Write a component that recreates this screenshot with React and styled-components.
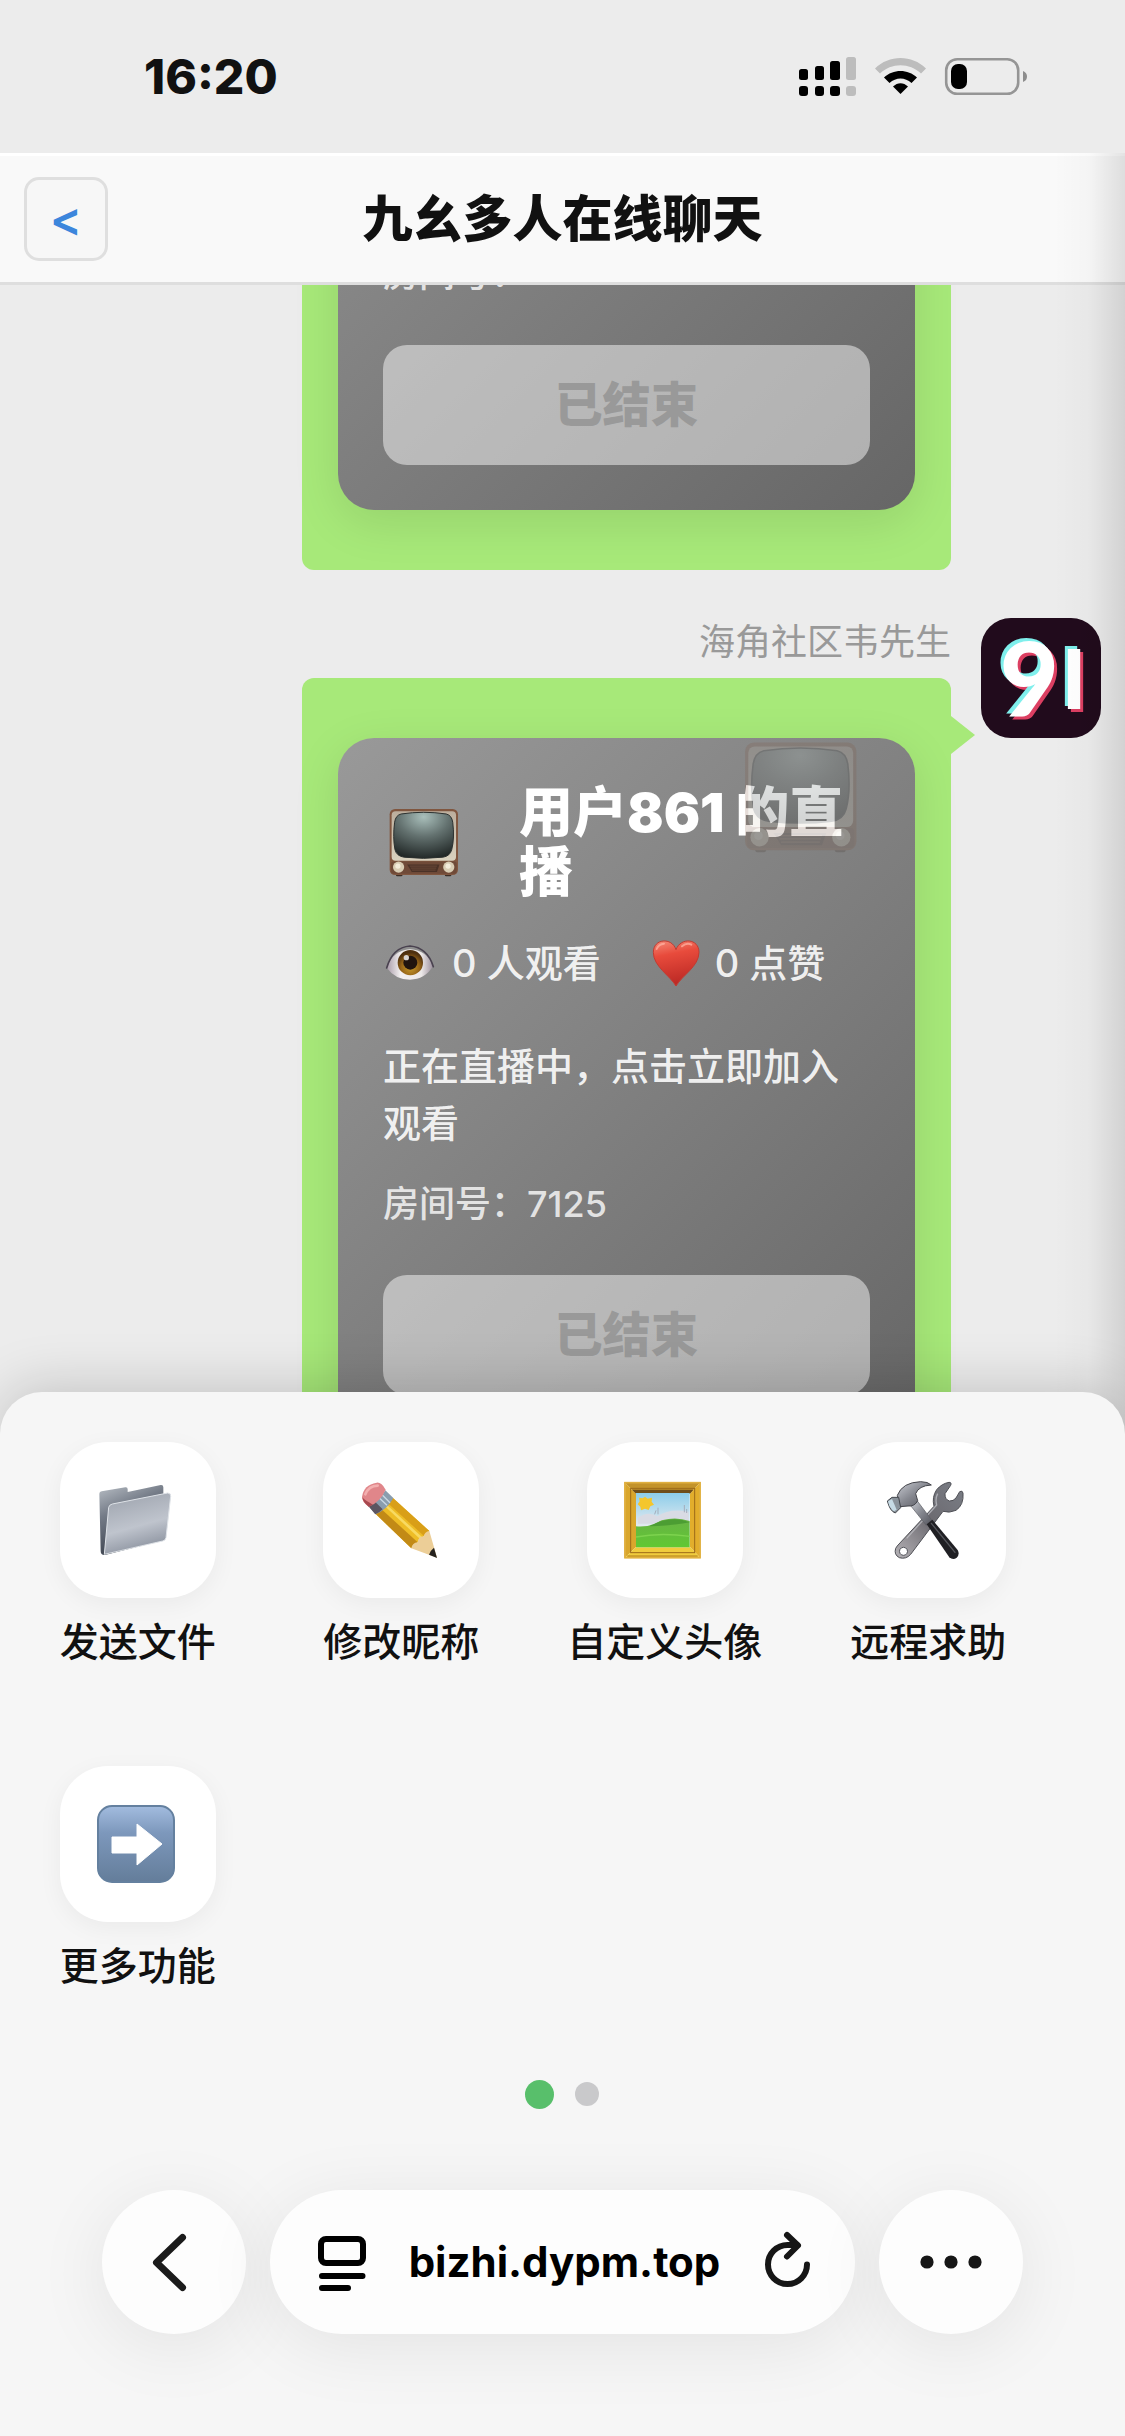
import React, { useState } from 'react'
import styled, { createGlobalStyle } from 'styled-components'

const GlobalStyle = createGlobalStyle`
  * {
    box-sizing: border-box;
  }
  body {
    margin: 0;
    background-color: #f6f6f6;
    font-family: Inter, 'Noto Sans CJK SC', sans-serif;
    color: #111;
  }
  button {
    font-family: inherit;
    border: none;
    padding: 0;
    background: none;
  }
  svg {
    display: block;
    flex-shrink: 0;
    overflow: visible;
  }
`

const Screen = styled.div`
  display: flex;
  flex-direction: column;
  height: 100vh;
  overflow: hidden;
`

const StatusBar = styled.div`
  display: flex;
  align-items: center;
  justify-content: space-between;
  flex-shrink: 0;
  height: 153px;
  padding: 0 96px 0 144px;
  background-color: #ececec;
`
const Time = styled.time`
  font-size: 48px;
  font-weight: 800;
  line-height: 60px;
`

const Page = styled.div`
  display: flex;
  flex-direction: column;
  flex: 1;
  min-height: 0;
  position: relative;
`
const EdgeShade = styled.div`
  position: absolute;
  top: 0;
  right: 0;
  bottom: 0;
  width: 72px;
  background: linear-gradient(to right, rgba(0,0,0,0), rgba(0,0,0,0.02) 50%, rgba(0,0,0,0.11));
  pointer-events: none;
`
const Header = styled.header`
  display: grid;
  grid-template-columns: 84px 1fr 84px;
  align-items: center;
  flex-shrink: 0;
  height: 132px;
  padding: 0 24px;
  background-color: #f9f9f9;
  border-top: 3px solid #fff;
  border-bottom: 3px solid #dedede;
`
const HeaderBack = styled.button`
  width: 84px;
  height: 84px;
  border: 3px solid #dfdfdf;
  border-radius: 15px;
  background-color: #f7f7f7;
  color: #3c86dc;
  font-size: 48px;
  font-weight: 600;
  line-height: 60px;
`
const Title = styled.h1`
  margin: 0;
  font-size: 50px;
  font-weight: 800;
  line-height: 72px;
  text-align: center;
`

const Chat = styled.main`
  display: flex;
  flex-direction: column;
  justify-content: flex-end;
  gap: 48px;
  flex: 1;
  min-height: 0;
  overflow: hidden;
  padding: 0 24px;
  background-color: #ececec;
`
const Message = styled.article`
  display: flex;
  justify-content: flex-end;
  align-items: flex-start;
  gap: 30px;
  flex-shrink: 0;
`
const MessageBody = styled.div`
  display: flex;
  flex-direction: column;
  gap: 12px;
  width: 649px;
`
const Sender = styled.div`
  font-size: 36px;
  line-height: 48px;
  color: #999;
  text-align: right;
`
const Bubble = styled.div`
  position: relative;
  padding: 60px 36px;
  border-radius: 12px;
  background-color: #a7e979;
  &::after {
    content: '';
    position: absolute;
    top: 38px;
    left: 100%;
    border: 19px solid transparent;
    border-left: 24px solid #a7e979;
    border-right: none;
  }
`
const Avatar = styled.div`
  display: flex;
  align-items: center;
  justify-content: center;
  gap: 3px;
  width: 120px;
  height: 120px;
  padding-left: 4px;
  border-radius: 30px;
  overflow: hidden;
  background-color: #210b1c;
  color: #fff;
  font-family: Lato, sans-serif;
  font-weight: 900;
  text-shadow: -3px -3px 0 #7fefec, 3px 3px 0 #dc3f62;
`
const AvatarSpace = styled.div`
  width: 120px;
`
const AvatarMark = styled.span`
  font-size: ${props => props.$size};
  line-height: 108px;
`

const LiveCard = styled.div`
  position: relative;
  display: flex;
  flex-direction: column;
  justify-content: flex-end;
  min-height: 702px;
  padding: 45px;
  border-radius: 36px;
  background: linear-gradient(135deg, #999, #666);
  box-shadow: 0 12px 48px rgba(0,0,0,0.1);
  color: #fff;
`
const CardHead = styled.div`
  display: flex;
  align-items: center;
  gap: 54px;
  padding-left: 6px;
`
const CardTitle = styled.h2`
  margin: 0;
  padding-left: 6px;
  font-size: 54px;
  font-weight: 900;
  line-height: 60px;
`
const Watermark = styled.div`
  position: absolute;
  top: 3px;
  right: 57px;
  opacity: 0.2;
`
const Stats = styled.div`
  display: flex;
  gap: 51px;
  margin: 36px 0 51px;
  font-size: 38px;
  font-weight: 500;
  line-height: 48px;
  color: rgba(255,255,255,0.9);
`
const Stat = styled.span`
  display: flex;
  align-items: center;
  gap: 15px;
`
const Desc = styled.p`
  margin: 0;
  font-size: 38px;
  font-weight: 500;
  line-height: 57px;
  color: rgba(255,255,255,0.9);
`
const Room = styled.p`
  margin: 30px 0 48px;
  font-size: 36px;
  font-weight: 500;
  line-height: 45px;
  color: rgba(255,255,255,0.8);
`
const EndedButton = styled.button`
  display: block;
  width: 100%;
  height: 120px;
  border-radius: 24px;
  background-color: rgba(255,255,255,0.48);
  color: #999;
  font-size: 48px;
  font-weight: 800;
  line-height: 72px;
`

// the sheet slides over the bottom of the message list
const Sheet = styled.section`
  position: relative;
  flex-shrink: 0;
  margin-top: -108px;
  border-radius: 42px 42px 0 0;
  background-color: #f6f6f6;
  box-shadow: 0 -6px 54px rgba(0,0,0,0.17);
`
const Features = styled.div`
  display: grid;
  grid-template-columns: repeat(4, 1fr);
  column-gap: 36px;
  row-gap: 96px;
  padding: 50px 83px 0 24px;
`
const Feature = styled.button`
  display: flex;
  flex-direction: column;
  align-items: center;
  gap: 15px;
  color: #111;
  font-size: 39px;
  font-weight: 500;
  line-height: 57px;
  white-space: nowrap;
`
const Tile = styled.span`
  display: flex;
  align-items: center;
  justify-content: center;
  width: 156px;
  height: 156px;
  border-radius: 48px;
  background-color: #fff;
  box-shadow: 0 6px 24px rgba(0,0,0,0.05);
`
const Dots = styled.div`
  display: flex;
  align-items: center;
  justify-content: center;
  gap: 21px;
  height: 30px;
  margin-top: 85px;
  padding-right: 2px;
`
const Dot = styled.button`
  width: ${props => props.$active ? '29px' : '24px'};
  height: ${props => props.$active ? '29px' : '24px'};
  border-radius: 50%;
  background-color: ${props => props.$active ? '#58bf6b' : '#c9c9cb'};
`

const BrowserBar = styled.nav`
  display: flex;
  gap: 24px;
  padding: 81px 102px 102px;
`
const RoundButton = styled.button`
  display: flex;
  align-items: center;
  justify-content: center;
  flex-shrink: 0;
  width: 144px;
  height: 144px;
  border-radius: 50%;
  background-color: #fdfdfd;
  box-shadow: 0 12px 72px rgba(0,0,0,0.08);
`
const AddressBar = styled.div`
  display: flex;
  align-items: center;
  justify-content: space-between;
  flex: 1;
  height: 144px;
  padding: 0 44px 0 48px;
  border-radius: 72px;
  background-color: #fdfdfd;
  box-shadow: 0 12px 72px rgba(0,0,0,0.08);
`
const Address = styled.a`
  color: #000;
  font-size: 42px;
  font-weight: 700;
  line-height: 60px;
  text-decoration: none;
`

const StatusIcons = () => (
  <svg width="230" height="40" viewBox="799 56 230 40">
    <g>
      <rect x="799" y="68" width="9" height="11" rx="2.5"/>
      <rect x="815" y="65" width="9" height="14" rx="2.5"/>
      <rect x="830" y="60" width="10" height="19" rx="2.5"/>
      <rect x="846" y="56" width="10" height="23" rx="2.5" fill="#bdbdbd"/>
      <rect x="799" y="85" width="9" height="10" rx="3"/>
      <rect x="815" y="85" width="9" height="10" rx="3"/>
      <rect x="830" y="85" width="10" height="10" rx="3"/>
      <rect x="846" y="85" width="10" height="10" rx="3" fill="#bdbdbd"/>
    </g>
    <path d="M875 67.500C889 53.500 912 53.500 926 67.500L921 72.500C909.500 61.500 891.500 61.500 880 72.500Z" fill="#bdbdbd"/>
    <path d="M884 76.500C893 67.700 908 67.700 917 76.500L911.500 82C905 76 896 76 889.500 82Z"/>
    <path d="M893 85.500C897.500 81 903.500 81 908 85.500L900.500 93Z"/>
    <rect x="946.200" y="58.200" width="72" height="34.600" rx="11" fill="none" stroke="#959595" strokeWidth="2.600"/>
    <rect x="951" y="63" width="16" height="25" rx="7"/>
    <path d="M1023 70Q1027 71.500 1027 75.500T1023 81Z" fill="#8d8d8d"/>
  </svg>
)

const TvIcon = ({ size }) => (
  <svg width={size} height={size} viewBox="55 234 212 212">
    <defs>
      <radialGradient id="tvScreen" cx="0.5" cy="0.1" r="0.95">
        <stop offset="0" stopColor="#a9bfbb"/>
        <stop offset="0.45" stopColor="#63716f"/>
        <stop offset="1" stopColor="#1c2221"/>
      </radialGradient>
      <linearGradient id="tvCase" x1="0" y1="0" x2="0" y2="1">
        <stop offset="0" stopColor="#bcae9d"/>
        <stop offset="1" stopColor="#d9d2bf"/>
      </linearGradient>
    </defs>
    <rect x="76" y="430" width="20" height="11" rx="4" fill="#3b2d25"/>
    <rect x="224" y="430" width="20" height="11" rx="4" fill="#3b2d25"/>
    <rect x="57" y="237" width="207" height="200" rx="16" fill="#80563f"/>
    <rect x="63" y="244" width="195" height="150" rx="12" fill="url(#tvCase)"/>
    <path d="M92 252Q160 242 228 252Q245 256 248 277Q254 325 245 360Q240 380 218 383Q160 390 101 383Q78 380 73 360Q66 322 72 277Q75 256 92 252Z" fill="url(#tvScreen)" stroke="#2a302f" strokeWidth="3"/>
    <rect x="61" y="396" width="199" height="37" rx="7" fill="#6f4a38"/>
    <path d="M110 405H208L200 428H124Z" fill="#4b3227"/>
    <path d="M118 410H200M121 416H198M124 422H196" stroke="#7b5542" strokeWidth="2"/>
    <circle cx="84" cy="413" r="17" fill="#d8ccb3"/>
    <circle cx="236" cy="413" r="17" fill="#d8ccb3"/>
    <circle cx="82" cy="410" r="8" fill="#f3ecdb"/>
    <circle cx="234" cy="410" r="8" fill="#f3ecdb"/>
  </svg>
)

const EyeIcon = () => (
  <svg width="54" height="48" viewBox="41 622 162 144">
    <defs>
      <linearGradient id="eyeWhite" x1="0" x2="1">
        <stop offset="0" stopColor="#a79aa8"/>
        <stop offset="0.3" stopColor="#f4f1f1"/>
        <stop offset="0.75" stopColor="#ece8e8"/>
        <stop offset="1" stopColor="#9b8f9c"/>
      </linearGradient>
      <radialGradient id="eyeIris" cx="0.5" cy="0.7" r="0.6">
        <stop offset="0" stopColor="#c79a2a"/>
        <stop offset="0.6" stopColor="#966418"/>
        <stop offset="1" stopColor="#4e3010"/>
      </radialGradient>
    </defs>
    <path d="M52 708Q72 655 122 653Q172 655 191 704Q166 744 122 744Q78 744 52 708Z" fill="url(#eyeWhite)"/>
    <circle cx="123" cy="693" r="38" fill="url(#eyeIris)"/>
    <circle cx="123" cy="693" r="21" fill="#20140e"/>
    <circle cx="111" cy="678" r="8" fill="#d9d4d2"/>
    <path d="M52 709Q70 647 122 643Q174 647 192 705" fill="none" stroke="#4a4250" strokeWidth="5" strokeLinecap="round"/>
  </svg>
)

const HeartIcon = () => (
  <svg width="48" height="48" viewBox="842 622 144 144">
    <defs>
      <linearGradient id="heart" x1="0" y1="0" x2="0.2" y2="1">
        <stop offset="0" stopColor="#f58b78"/>
        <stop offset="0.35" stopColor="#e84b3c"/>
        <stop offset="1" stopColor="#bd2a25"/>
      </linearGradient>
    </defs>
    <path d="M914 763C896 732 846 704 846 662C846 620 902 616 914 654C928 616 983 620 983 662C983 704 932 732 914 763Z" fill="url(#heart)" stroke="#c33a30" strokeWidth="3"/>
    <path d="M856 652Q862 637 878 636M932 644Q946 632 960 639" stroke="#ffb5a5" strokeWidth="6" strokeLinecap="round" fill="none" opacity="0.7"/>
  </svg>
)

const FolderIcon = () => (
  <svg width="78" height="78" viewBox="147 152 234 234">
    <defs>
      <linearGradient id="folderBack" x1="0" y1="0" x2="0.4" y2="1">
        <stop offset="0" stopColor="#b9bfc6"/>
        <stop offset="0.4" stopColor="#757c88"/>
        <stop offset="1" stopColor="#363c48"/>
      </linearGradient>
      <linearGradient id="folderFront" x1="0.3" y1="0" x2="0.6" y2="1">
        <stop offset="0" stopColor="#9fa5af"/>
        <stop offset="0.55" stopColor="#bfc4cd"/>
        <stop offset="1" stopColor="#858c99"/>
      </linearGradient>
    </defs>
    <path d="M148 190Q148 184 155 183L226 171Q233 170 233 177V185L332 164Q340 163 340 171V330L165 374Q152 375 152 362Z" fill="url(#folderBack)"/>
    <path d="M176 231Q178 223 187 221L353 188Q363 188 362 198L348 322Q346 331 338 332L163 372Z" fill="url(#folderFront)" stroke="#dfe3e8" strokeWidth="3"/>
  </svg>
)

const PencilIcon = () => (
  <svg width="78" height="78" viewBox="936 152 234 234">
    <path d="M975 249L1028 202L1138 302L1084 354Z" fill="#eebd26"/>
    <path d="M975 249L993 235L1103 336L1084 354Z" fill="#c28a16"/>
    <path d="M1012 217L1028 202L1138 302L1122 317Z" fill="#d99f18"/>
    <path d="M1003 226L1008 221L1117 321L1111 327Z" fill="#f8da62"/>
    <path d="M1084 354Q1087 337 1103 336Q1104 319 1121 318Q1124 304 1138 302L1161 382Z" fill="#ecce97"/>
    <path d="M1152 352L1161 383L1137 373Q1140 361 1152 352Z" fill="#25221f"/>
    <path d="M955 227Q985 216 1006 180L1030 203Q1010 239 976 252Z" fill="#8a9dae"/>
    <path d="M955 227Q967 223 976 215L998 237Q987 248 976 252Z" fill="#5c5561"/>
    <path d="M988 203L1011 225M997 194L1020 217" stroke="#c9d8e4" strokeWidth="4"/>
    <path d="M936 200Q941 163 980 157Q994 155 1007 178Q990 216 956 229Q936 215 936 200Z" fill="#e0868a"/>
    <path d="M946 192Q956 167 983 166" stroke="#f3b0b0" strokeWidth="8" fill="none" strokeLinecap="round"/>
    <path d="M937 201Q939 217 956 229L969 223Q945 211 937 201Z" fill="#a8494f"/>
  </svg>
)

const PictureIcon = () => (
  <svg width="78" height="78" viewBox="168 152 234 234">
    <defs>
      <linearGradient id="sky" x1="0" y1="0" x2="0" y2="1">
        <stop offset="0" stopColor="#8ccdea"/>
        <stop offset="0.6" stopColor="#e3eaf0"/>
      </linearGradient>
      <linearGradient id="grass" x1="0" y1="0" x2="0" y2="1">
        <stop offset="0" stopColor="#69b346"/>
        <stop offset="1" stopColor="#5fc832"/>
      </linearGradient>
    </defs>
    <path d="M163 155H392L360 190H198Z" fill="#c3932a"/>
    <path d="M163 155L198 190V350L163 384Z" fill="#d9a62c"/>
    <path d="M392 155V384L360 350V190Z" fill="#e2ae2c"/>
    <path d="M163 384L198 350H360L392 384Z" fill="#f0cc3c"/>
    <rect x="165" y="157" width="225" height="225" fill="none" stroke="#e0b040" strokeWidth="5"/>
    <rect x="182" y="174" width="192" height="193" fill="none" stroke="#9c6a18" strokeWidth="3"/>
    <path d="M172 377H383" stroke="#b07d1c" strokeWidth="3"/>
    <path d="M186 178H370L360 190H198Z" fill="#6f4e1a"/>
    <rect x="198" y="188" width="161" height="163" fill="url(#sky)"/>
    <path d="M204 262Q235 240 262 258Q300 232 356 244V280H204Z" fill="#d9dbe4"/>
    <path d="M198 288Q240 292 275 270Q318 258 359 272V351H198Z" fill="url(#grass)"/>
    <path d="M238 288Q275 268 292 269Q325 262 359 276Q310 286 238 288Z" fill="#4c9d33"/>
    <path d="M198 320Q270 306 359 318" stroke="#7dd34e" strokeWidth="4" fill="none"/>
    <path d="M225 199L233 205L246 202L245 214L252 223L241 228L236 239L225 235L213 240L211 229L203 222L209 213L207 202L218 204Z" fill="#f4c62c"/>
    <path d="M264 232V252M258 240L254 252M343 224V246M350 236V248" stroke="#a3adbb" strokeWidth="3"/>
  </svg>
)

const ToolsIcon = () => (
  <svg width="78" height="78" viewBox="957 152 234 234">
    <defs>
      <linearGradient id="steel" x1="0" y1="0" x2="1" y2="1">
        <stop offset="0" stopColor="#c9ccd3"/>
        <stop offset="0.5" stopColor="#85878f"/>
        <stop offset="1" stopColor="#54555d"/>
      </linearGradient>
      <linearGradient id="wrench" x1="1" y1="0" x2="0" y2="1">
        <stop offset="0" stopColor="#7a7e86"/>
        <stop offset="0.5" stopColor="#6c6a70"/>
        <stop offset="1" stopColor="#b5b2b6"/>
      </linearGradient>
    </defs>
    <path d="M1137 156Q1146 156 1142 165L1125 190Q1124 207 1138 212Q1150 213 1158 203L1169 184Q1177 179 1179 188Q1182 224 1158 240Q1138 249 1119 243L1022 372Q1008 388 988 382Q971 373 977 354Q981 347 987 341L1092 228Q1085 200 1100 178Q1115 160 1137 156ZM1000 351A12 12 0 1 0 1001 351Z" fill="url(#wrench)" fillRule="evenodd" stroke="#4f5056" strokeWidth="3"/>
    <path d="M1103 190Q1095 205 1100 224L1010 324" stroke="#c4c6cc" strokeWidth="4" fill="none" opacity="0.7"/>
    <path d="M1022 226L1042 212L1085 269L1069 285Z" fill="url(#steel)" stroke="#5b5c62" strokeWidth="2"/>
    <path d="M1070 282L1087 268L1163 359Q1170 373 1160 382Q1149 391 1138 381Z" fill="#202024"/>
    <path d="M1084 279L1155 366" stroke="#56575d" strokeWidth="4" strokeLinecap="round"/>
    <path d="M982 195Q997 156 1052 154Q1074 154 1084 164Q1046 166 1037 190L1043 211Q1034 229 1014 227L990 229Z" fill="url(#steel)" stroke="#44454b" strokeWidth="3"/>
    <path d="M952 212L966 201L986 201L992 232L976 248Q960 243 952 212Z" fill="#8a929a" stroke="#44474d" strokeWidth="3"/>
    <path d="M954 213L966 206L980 238L972 243Q958 234 954 213Z" fill="#c7dbe5"/>
  </svg>
)

const ArrowIcon = () => (
  <svg width="78" height="78" viewBox="2 0 78 78">
    <defs>
      <linearGradient id="arrowBox" x1="0" y1="0" x2="0" y2="1">
        <stop offset="0" stopColor="#a3bcdf"/>
        <stop offset="0.35" stopColor="#7d98bc"/>
        <stop offset="1" stopColor="#647d9a"/>
      </linearGradient>
    </defs>
    <rect x="1" y="1" width="76" height="76" rx="14" fill="url(#arrowBox)" stroke="#64809f" strokeWidth="2"/>
    <path d="M15 32H40V19L65 39L40 60V48H15Z" fill="#fff" stroke="#fff" strokeWidth="1" strokeLinejoin="round"/>
  </svg>
)

const BackIcon = () => (
  <svg width="48" height="60" viewBox="150 2231 48 60" fill="none" stroke="#1b1b1b" strokeWidth="7" strokeLinecap="round" strokeLinejoin="round">
    <path d="M182.500 2236.500L156.500 2261.500L182.500 2286.500"/>
  </svg>
)

const ReaderIcon = () => (
  <svg width="48" height="54" viewBox="318 2234 48 54" fill="none" stroke="#000" strokeWidth="6" strokeLinecap="round">
    <rect x="321" y="2238" width="42" height="24" rx="5"/>
    <path d="M322 2275H362.500M322 2287H348"/>
  </svg>
)

const ReloadIcon = () => (
  <svg width="48" height="54" viewBox="764 2234 48 54" fill="none" stroke="#161616" strokeWidth="6" strokeLinecap="round" strokeLinejoin="round">
    <path d="M808 2263.500A19.500 19.500 0 1 1 788.500 2244H798"/>
    <path d="M788 2234L799 2244.500L788 2255.500"/>
  </svg>
)

const MoreIcon = () => (
  <svg width="62" height="14" viewBox="0 0 62 14" fill="#161616">
    <circle cx="7" cy="7" r="6.600"/>
    <circle cx="31" cy="7" r="6.600"/>
    <circle cx="55" cy="7" r="6.600"/>
  </svg>
)

const messages = [
  { id: 1, scrolled: true, room: '' },
  { id: 2, sender: '海角社区韦先生', user: '用户861', views: 0, likes: 0, room: '7125' },
]

const features = [
  { name: '发送文件', Icon: FolderIcon },
  { name: '修改昵称', Icon: PencilIcon },
  { name: '自定义头像', Icon: PictureIcon },
  { name: '远程求助', Icon: ToolsIcon },
  { name: '更多功能', Icon: ArrowIcon },
]

// a message that is half scrolled out only keeps the lower part of its card
const LiveMessage = ({ message }) => (
  <Message>
    <MessageBody>
      {!message.scrolled && <Sender>{message.sender}</Sender>}
      <Bubble>
        <LiveCard>
          {!message.scrolled &&
            <>
              <CardHead>
                <TvIcon size={70}/>
                <CardTitle>{message.user} 的直播</CardTitle>
              </CardHead>
              <Stats>
                <Stat><EyeIcon/>{message.views} 人观看</Stat>
                <Stat><HeartIcon/>{message.likes} 点赞</Stat>
              </Stats>
              <Desc>正在直播中，点击立即加入观看</Desc>
            </>
          }
          <Room>房间号：{message.room}</Room>
          <EndedButton disabled>已结束</EndedButton>
          {!message.scrolled && <Watermark><TvIcon size={114}/></Watermark>}
        </LiveCard>
      </Bubble>
    </MessageBody>
    {message.scrolled
      ? <AvatarSpace/>
      : <Avatar>
          <AvatarMark $size="102px">9</AvatarMark>
          <AvatarMark $size="81px">I</AvatarMark>
        </Avatar>
    }
  </Message>
)

const App = () => {
  const [page, setPage] = useState(0)

  return (
    <Screen>
      <GlobalStyle/>
      <StatusBar>
        <Time>16:20</Time>
        <StatusIcons/>
      </StatusBar>
      <Page>
        <Header>
          <HeaderBack>&lt;</HeaderBack>
          <Title>九幺多人在线聊天</Title>
        </Header>
        <Chat>
          {messages.map(message => <LiveMessage key={message.id} message={message}/>)}
        </Chat>
        <EdgeShade/>
        <Sheet>
          <Features>
            {features.map(({ name, Icon }) => (
              <Feature key={name}>
                <Tile><Icon/></Tile>
                {name}
              </Feature>
            ))}
          </Features>
          <Dots>
            {[0, 1].map(index => (
              <Dot key={index} $active={index === page} aria-label={`${index + 1}`} onClick={() => setPage(index)}/>
            ))}
          </Dots>
          <BrowserBar>
            <RoundButton aria-label="返回"><BackIcon/></RoundButton>
            <AddressBar>
              <ReaderIcon/>
              <Address href="#">bizhi.dypm.top</Address>
              <button aria-label="刷新"><ReloadIcon/></button>
            </AddressBar>
            <RoundButton aria-label="更多"><MoreIcon/></RoundButton>
          </BrowserBar>
        </Sheet>
      </Page>
    </Screen>
  )
}

export default App
